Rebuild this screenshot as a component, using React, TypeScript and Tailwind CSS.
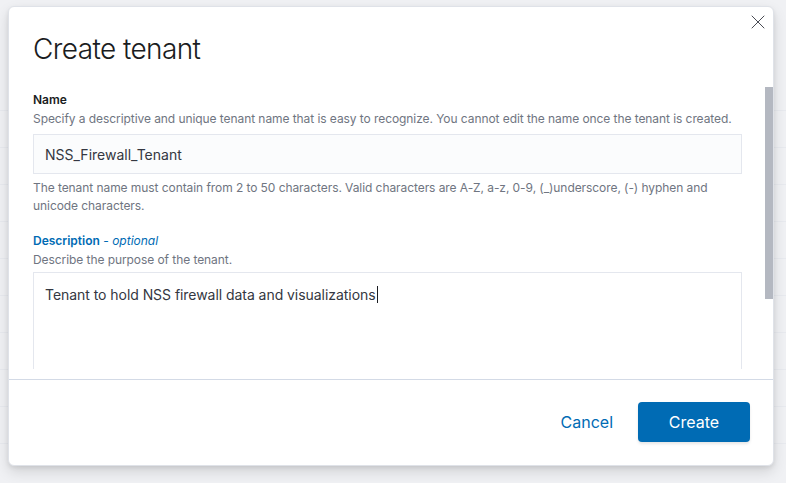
import { X } from "lucide-react";

export default function App() {
  return (
    <div className="relative h-[483px] w-[786px] overflow-hidden bg-[#f0f1f4] font-['Inter',sans-serif] text-[#343741]">
      {/* faint page behind the overlay */}
      <div className="absolute inset-0 flex flex-col gap-[36px] pt-[110px] opacity-60">
        {Array.from({ length: 10 }).map((_, i) => (
          <div key={i} className="h-px bg-[#e4e7ec]" />
        ))}
      </div>

      <div className="absolute left-[8px] top-[6px] flex h-[460px] w-[766px] flex-col rounded-[6px] border border-[#dfe2e8] bg-white shadow-[0_6px_14px_rgba(0,0,0,0.12),0_2px_4px_rgba(0,0,0,0.08)]">
        <button className="absolute right-[3px] top-[3px] text-[#343741]">
          <X size={24} strokeWidth={0.9} />
        </button>

        <div className="h-[80px] shrink-0 px-[24px] pt-[24px]">
          <h1 className="text-[28px] font-light leading-[36px] tracking-[-0.6px] text-[#1a1c21]">
            Create tenant
          </h1>
        </div>

        <div className="relative h-[282px] shrink-0 overflow-hidden">
          <div className="absolute right-[0px] top-0 h-[212px] w-[8px] bg-[#b4b8c1]" />
          <div className="px-[24px] pt-[6px]">
            <div className="text-[12px] font-semibold leading-[14px] text-[#1a1c21]">
              Name
            </div>
            <div className="mt-[4px] text-[12px] leading-[16px] tracking-[-0.07px] text-[#6f7581]">
              Specify a descriptive and unique tenant name that is easy to recognize. You cannot edit the name once the tenant is created.
            </div>
            <div className="mt-[7px] flex h-[40px] w-[709px] items-center border border-[#e4e7ee] bg-[#fbfcfd] px-[11px] text-[14px] text-[#343741]">
              NSS_Firewall_Tenant
            </div>
            <div className="mt-[5px] w-[709px] text-[12px] leading-[18px] tracking-[-0.07px] text-[#6f7581]">
              The tenant name must contain from 2 to 50 characters. Valid characters are A-Z, a-z, 0-9, (_)underscore, (-) hyphen and unicode characters.
            </div>

            <div className="mt-[19px] text-[12px] leading-[14px] text-[#006bb4]">
              <span className="font-semibold">Description</span>
              <span> - </span>
              <span className="italic">optional</span>
            </div>
            <div className="mt-[4px] text-[12px] leading-[16px] tracking-[-0.07px] text-[#6f7581]">
              Describe the purpose of the tenant.
            </div>
            <div className="mt-[4px] h-[120px] w-[709px] border border-[#e4e7ee] bg-white px-[11px] pt-[10px] text-[14px] leading-[20px] tracking-[-0.05px] text-[#343741]">
              Tenant to hold NSS firewall data and visualizations
              <span className="ml-px inline-block h-[17px] w-px translate-y-[3px] bg-[#1a1c21]" />
            </div>
          </div>
        </div>

        <div className="h-[10px] shrink-0" />

        <div className="flex flex-1 items-center justify-end gap-[24px] border-t border-[#d3dae6] px-[23px] pb-[2px]">
          <button className="px-[1px] text-[16px] text-[#006bb4]">Cancel</button>
          <button className="h-[40px] w-[112px] rounded-[4px] bg-[#006bb4] text-[16px] text-white shadow-[0_2px_3px_rgba(0,0,0,0.1)]">
            Create
          </button>
        </div>
      </div>
    </div>
  );
}
